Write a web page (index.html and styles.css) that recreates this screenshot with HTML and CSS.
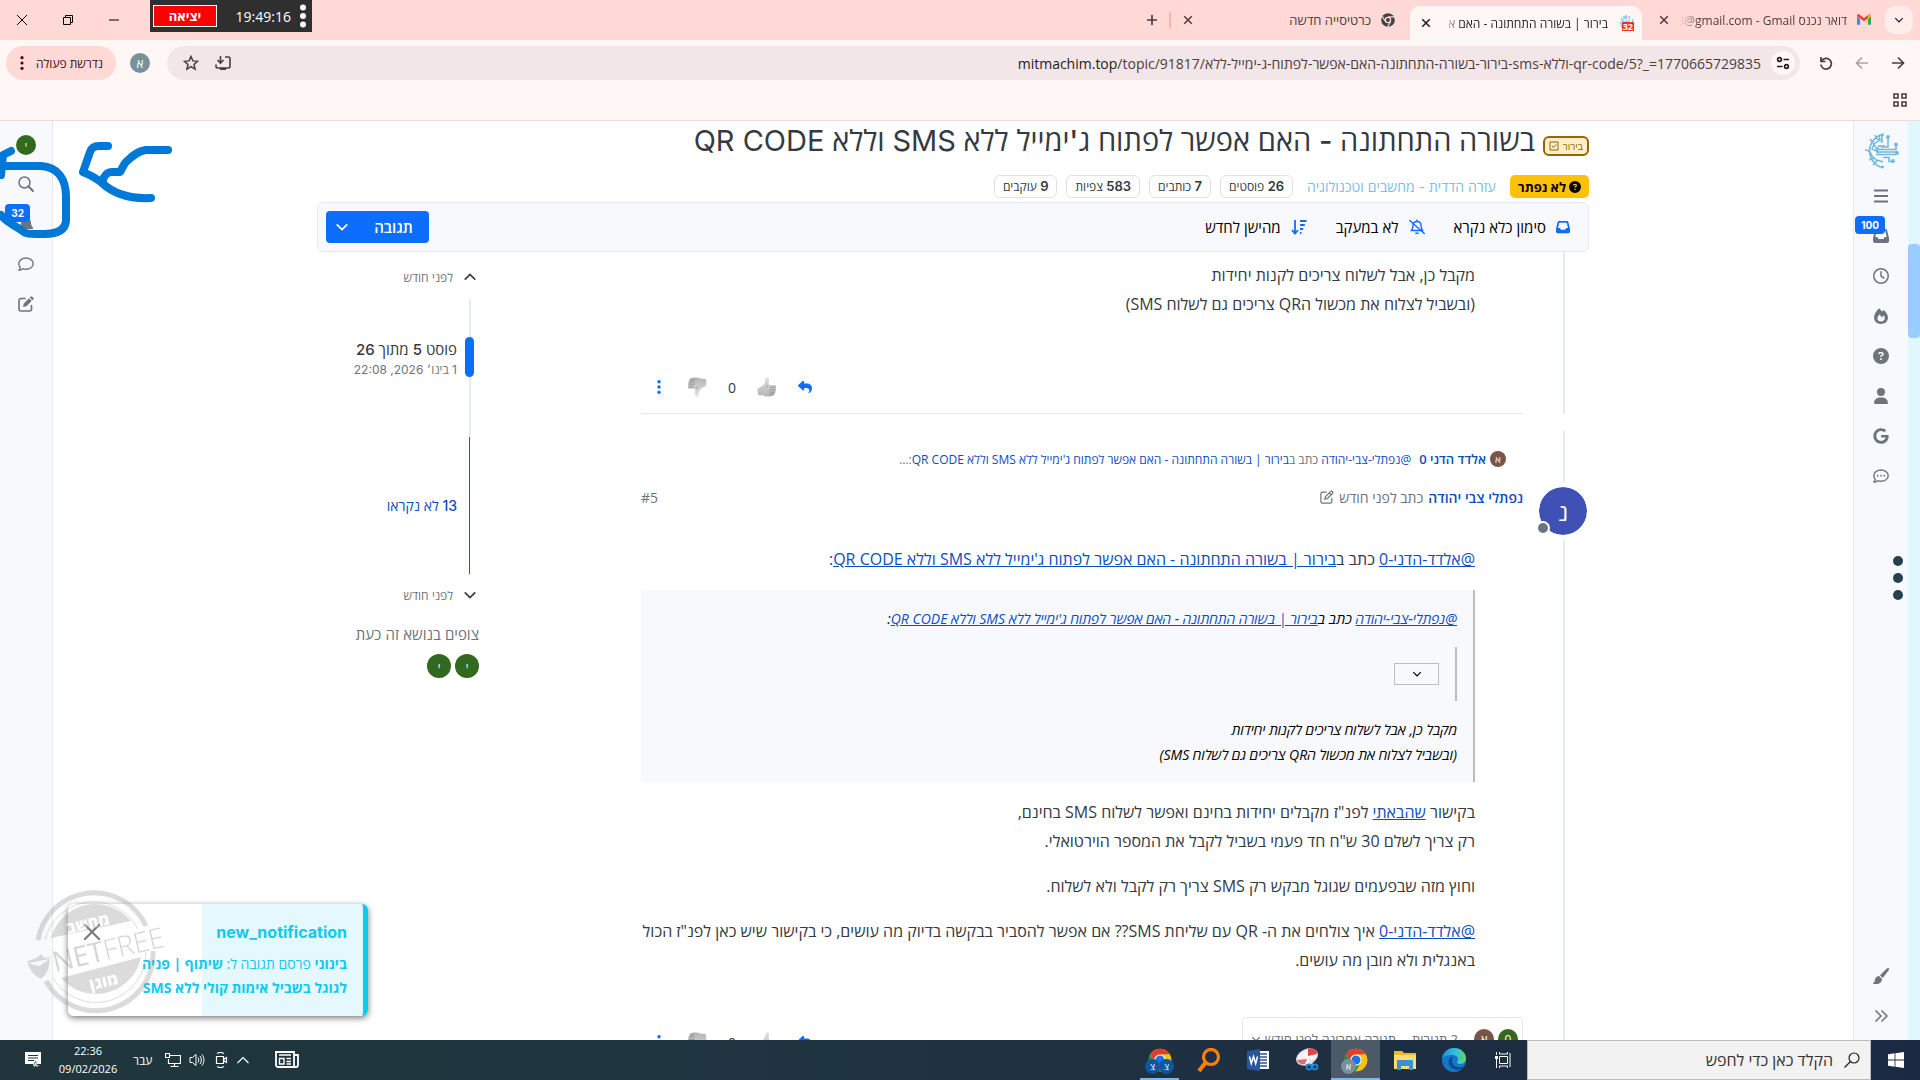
FILE: index.html
```html
<!DOCTYPE html>
<html lang="he" dir="rtl">
<head>
<meta charset="utf-8">
<title>בירור | בשורה התחתונה</title>
<link rel="stylesheet" href="styles.css">
</head>
<body>
<svg class="defs" aria-hidden="true">
  <defs><linearGradient id="tg" x2="0" y2="1"><stop stop-color="#e2e2e2"/><stop offset="1" stop-color="#b4b4b4"/></linearGradient></defs>
  <symbol id="x" viewBox="0 0 16 16"><path d="M3 3l10 10M13 3L3 13" fill="none" stroke="currentColor" stroke-width="2"/></symbol>
  <symbol id="down" viewBox="0 0 16 16"><path d="M2 5l6 6 6-6" fill="none" stroke="currentColor" stroke-width="2"/></symbol>
  <symbol id="up" viewBox="0 0 16 16"><path d="M2 11l6-6 6 6" fill="none" stroke="currentColor" stroke-width="2"/></symbol>
  <symbol id="inbox" viewBox="0 0 512 512"><path fill="currentColor" d="M121 32C91.6 32 66 52 58.9 80.5L1.9 308.4C.6 313.5 0 318.7 0 323.9V416c0 35.3 28.7 64 64 64H448c35.3 0 64-28.7 64-64V323.9c0-5.2-.6-10.4-1.9-15.5l-57-227.9C446 52 420.4 32 391 32H121zm0 64H391l48 192H387.8c-12.1 0-23.2 6.8-28.6 17.7l-14.3 28.6c-5.4 10.8-16.5 17.7-28.6 17.7H195.8c-12.1 0-23.2-6.8-28.6-17.7l-14.3-28.6c-5.4-10.8-16.5-17.7-28.6-17.7H73L121 96z"/></symbol>
  <symbol id="help" viewBox="0 0 512 512"><path fill="currentColor" fill-rule="evenodd" d="M256 512A256 256 0 1 0 256 0a256 256 0 1 0 0 512zM169.8 165.3c7.9-22.3 29.1-37.3 52.8-37.3h58.3c34.9 0 63.1 28.3 63.1 63.1c0 22.6-12.1 43.5-31.7 54.8L280 264.4c-.2 13-10.9 23.6-24 23.6c-13.3 0-24-10.7-24-24V250.5c0-8.6 4.6-16.5 12.1-20.8l44.3-25.4c4.7-2.7 7.6-7.7 7.6-13.1c0-8.4-6.8-15.1-15.1-15.1H222.6c-3.4 0-6.4 2.1-7.5 5.3l-.4 1.2c-4.4 12.5-18.2 19-30.6 14.6s-19-18.2-14.6-30.6l.4-1.2zM224 352a32 32 0 1 1 64 0 32 32 0 1 1-64 0z"/></symbol>
  <symbol id="reply" viewBox="0 0 512 512"><path fill="currentColor" d="M205 34.8c11.5 5.1 19 16.6 19 29.2v64H336c97.2 0 176 78.8 176 176c0 113.3-81.5 163.9-100.2 174.1c-2.5 1.4-5.3 1.9-8.1 1.9c-10.9 0-19.7-8.9-19.7-19.7c0-7.5 4.3-14.4 9.8-19.5c9.4-8.8 22.2-26.4 22.2-56.7c0-53-43-96-96-96H224v64c0 12.6-7.4 24.1-19 29.2s-25 3-34.4-5.4l-160-144C3.9 225.7 0 217.1 0 208s3.9-17.7 10.6-23.8l160-144c9.4-8.5 22.9-10.6 34.4-5.4z"/></symbol>
  <symbol id="search" viewBox="0 0 16 16"><circle cx="6.5" cy="6.5" r="5.5" fill="none" stroke="currentColor" stroke-width="1.5"/><path d="M10.5 10.5L15 15" stroke="currentColor" stroke-width="1.9" stroke-linecap="round"/></symbol>
  <symbol id="edit" viewBox="0 0 16 16"><path d="M7 2.5H3A2 2 0 0 0 1 4.500v8.500a2 2 0 0 0 2 2h8.500a2 2 0 0 0 2-2V9.500" fill="none" stroke="currentColor" stroke-width="1.600" stroke-linecap="round"/><path d="M5 11l.8-3.500L11 2.300l2.700 2.700-5.200 5.200zM11.700 1.600l.9-.9a1.200 1.200 0 0 1 1.700 0l1 1a1.200 1.200 0 0 1 0 1.700l-.9.9z" fill="currentColor"/></symbol>
  <symbol id="editline" viewBox="0 0 16 16"><path d="M7 2.500H3A2 2 0 0 0 1 4.500v8.500a2 2 0 0 0 2 2h8.500a2 2 0 0 0 2-2V9.500M5.500 10.500l.8-3L12 1.800a1.500 1.500 0 0 1 2.200 2.200L8.500 9.700zM10.500 3.300l2.200 2.200" fill="none" stroke="currentColor" stroke-width="1.400" stroke-linecap="round"/></symbol>
  <symbol id="comment" viewBox="0 0 16 16"><path d="M8 2c3.900 0 7.200 2.400 7.200 5.700S11.900 13.300 8 13.300c-1.200 0-2.300-.2-3.300-.6C3.600 13.700 2.200 14.200 1 14.200c.7-.9 1.200-2 1.200-3.100C1.300 10.100.8 9 .8 7.700.8 4.400 4.100 2 8 2z" fill="none" stroke="currentColor" stroke-width="1.400" stroke-linejoin="round"/></symbol>
  <symbol id="thumb" viewBox="0 0 20 20"><path d="M1 11c3-1 6-3 7-6 .3-1.500.2-3.800 1.200-4.600 1.800-.8 3.200 1 2.800 4L11.500 8H18c1.200.3 1.500 1.600.6 2.500.8.600.8 1.800-.1 2.300.6.7.5 1.800-.4 2.300.4.900 0 1.800-.9 2-.4 1.700-2 2.400-4 2.400-4 0-5-.2-7.500-1.300H1.500C.4 16 .3 13 1 11z" fill="url(#tg)"/><path d="M13 10.200h5.500M12.500 12.800h6M12.500 15.200h5.500M12.500 17.300h4.700M11.500 8c-1 .4-1.600 1.200-1.800 2.200" stroke="#8d8d8d" stroke-width=".9" fill="none"/></symbol>
  <symbol id="chrome" viewBox="0 0 32 32"><circle cx="16" cy="16" r="15" fill="#fbc116"/><path d="M3 8.500A15 15 0 0 1 29 8.500H16a7.500 7.500 0 0 0-6.500 11.200z" fill="#e33b2e"/><path d="M3 8.500A15 15 0 0 0 16 31l6.500-11.300a7.500 7.500 0 0 1-13 0z" fill="#229342"/><path d="M16 31A15 15 0 0 0 29 8.500H16a7.500 7.500 0 0 1 6.500 11.200z" fill="#fbc116"/><circle cx="16" cy="16" r="7.500" fill="#fff"/><circle cx="16" cy="16" r="6" fill="#1a73e8"/></symbol>
  <symbol id="globe" viewBox="0 0 36 36"><g fill="none" stroke="#6db9dd" stroke-width="1.500"><path d="M19.500 1.500A17 17 0 0 0 19.500 34.500"/><path d="M7 6l4 5-2 5 6 3-4-8 7-5M2 17c4 0 6 3 7 6l5 5-4 4M14 27l6 2M22 13h-6l-2 4M12 2l2 4 5 3V2M16.500 1.500v7M6 27l5-2"/><path d="M13 16.500h21M13 19h22M13 21.500h20"/><path d="M25 4v10h-7M33 12v5M20 24.500h6v4h4"/></g><g fill="#6db9dd"><circle cx="19.500" cy="1.800" r="1.500"/><circle cx="25" cy="4" r="1.900"/><circle cx="33" cy="11.500" r="1.900"/><circle cx="34" cy="20" r="1.900"/><circle cx="30" cy="28" r="1.900"/><circle cx="19.500" cy="34" r="1.500"/></g></symbol>
</svg>

<header class="browser">
  <div class="tabs">
    <button class="tab-menu" aria-label="חיפוש כרטיסיות"><svg class="i10"><use href="#down"/></svg></button>
    <div class="tab gmail">
      <svg class="i14" viewBox="0 0 16 14"><path d="M0 2v10.500h3.500V6z" fill="#4285f4"/><path d="M12.500 6v6.500H16V2z" fill="#34a853"/><path d="M0 2.500l8 6 8-6V1.500C15.500.3 14 .3 13 1L8 4.800 3 1C2 .3.5.3 0 1.500z" fill="#ea4335"/><path d="M12.500 1.500V5.200L16 2.600C16 .6 14 .2 12.500 1.500z" fill="#fbbc04"/></svg>
      <span class="tab-text">דואר נכנס <bdi dir="ltr">3@gmail.com - Gmail</bdi></span>
      <svg class="i12"><use href="#x"/></svg>
    </div>
    <div class="tab active">
      <span class="fav"><svg class="i16"><use href="#globe"/></svg><b>32</b></span>
      <span class="tab-text">בירור | בשורה התחתונה - האם א</span>
      <svg class="i12"><use href="#x"/></svg>
    </div>
    <div class="tab plain">
      <svg class="i14" viewBox="0 0 16 16"><circle cx="8" cy="8" r="7.800" fill="#3f4246"/><circle cx="8" cy="8" r="3" fill="#3f4246" stroke="#ffd9d6" stroke-width="1.500"/><path d="M8 4.500h7M5 9.800L1.500 3.800M11 9.800L7.600 15.600" stroke="#ffd9d6" stroke-width="1.300"/></svg>
      <span class="tab-text">כרטיסייה חדשה</span>
      <svg class="i12"><use href="#x"/></svg>
    </div>
    <i class="tab-sep"></i>
    <button class="new-tab" aria-label="כרטיסייה חדשה"><svg class="i12" viewBox="0 0 12 12"><path d="M6 1v10M1 6h10" stroke="currentColor" stroke-width="1.700"/></svg></button>
    <div class="win">
      <svg class="i12" viewBox="0 0 12 12"><path d="M1 6h10" stroke="#000"/></svg>
      <svg class="i12" viewBox="0 0 12 12"><path d="M1.500 3.500h7v7h-7zM3.500 3.500v-2h7v7h-2" fill="none" stroke="#000"/></svg>
      <svg class="i12" viewBox="0 0 12 12"><path d="M1 1l10 10M11 1L1 11" stroke="#000"/></svg>
    </div>
  </div>
  <div class="nav">
    <svg class="i14" viewBox="0 0 14 14"><path d="M1 7h11M7 1.500L12.500 7 7 12.500" fill="none" stroke="currentColor" stroke-width="1.700"/></svg>
    <svg class="i14 dim" viewBox="0 0 14 14"><path d="M13 7H2M7 1.500L1.500 7 7 12.500" fill="none" stroke="currentColor" stroke-width="1.700"/></svg>
    <svg class="i14" viewBox="0 0 14 14"><path d="M2 1v4.500h4.500M2.500 5A5.300 5.300 0 1 1 1.800 8.500" fill="none" stroke="currentColor" stroke-width="1.700"/></svg>
    <div class="omnibox">
      <span class="site"><svg class="i14" viewBox="0 0 14 14"><g fill="none" stroke="#1f1a1b" stroke-width="1.600"><circle cx="3.500" cy="3.500" r="1.900"/><path d="M7.500 3.500H13M1 10.500h5.500"/><circle cx="10.500" cy="10.500" r="1.900"/></g></svg></span>
      <span class="url" dir="ltr"><b>mitmachim.top</b>/topic/91817/בירור-בשורה-התחתונה-האם-אפשר-לפתוח-ג-ימייל-ללא-sms-וללא-qr-code/5?_=1770665729835</span>
      <svg class="i16" viewBox="0 0 16 16"><path d="M10 2h3.500a1.500 1.500 0 0 1 1.500 1.500v8a1.500 1.500 0 0 1-1.500 1.500h-11A1.500 1.500 0 0 1 1 11.500V9.500M5.500 1v6.500M2.500 5l3 3 3-3" fill="none" stroke="currentColor" stroke-width="1.600"/><path d="M5 13h6v2H5z" fill="currentColor"/></svg>
      <svg class="i16" viewBox="0 0 16 16"><path d="M8 1.500l1.900 4.400 4.700.4-3.600 3.100 1.100 4.700L8 11.600l-4.100 2.500L5 9.400 1.400 6.300l4.700-.4z" fill="none" stroke="currentColor" stroke-width="1.500"/></svg>
    </div>
    <span class="profile">א</span>
    <button class="action-pill">נדרשת פעולה<svg class="v14" viewBox="0 0 4 14"><g fill="currentColor"><circle cx="2" cy="1.700" r="1.600"/><circle cx="2" cy="7" r="1.600"/><circle cx="2" cy="12.300" r="1.600"/></g></svg></button>
  </div>
  <div class="bookmarks"><svg class="i14" viewBox="0 0 14 14"><path d="M1 1h4v4H1zM9 1h4v4H9zM1 9h4v4H1zM9 9h4v4H9z" fill="none" stroke="currentColor" stroke-width="1.600"/></svg></div>
  <div class="timer">
    <svg class="v24" viewBox="0 0 8 24"><g fill="#fff"><circle cx="4" cy="3.500" r="3"/><circle cx="4" cy="12" r="3"/><circle cx="4" cy="20.500" r="3"/></g></svg>
    <span>19:49:16</span><button>יציאה</button>
  </div>
</header>

<div class="page">
  <div class="scroll"><i></i></div>
  <nav class="side right">
    <svg class="i36"><use href="#globe"/></svg>
    <a href="#" aria-label="תפריט"><svg class="i16" viewBox="0 0 16 16"><path d="M1 2.500h14M1 8h14M1 13.500h14" stroke="currentColor" stroke-width="1.800"/></svg></a>
    <a href="#" aria-label="לא נקראו"><svg class="i16"><use href="#inbox"/></svg><b class="count">100</b></a>
    <a href="#" aria-label="אחרונים"><svg class="i16" viewBox="0 0 512 512"><path fill="currentColor" d="M464 256A208 208 0 1 1 48 256a208 208 0 1 1 416 0zM0 256a256 256 0 1 0 512 0A256 256 0 1 0 0 256zM232 120V256c0 8 4 15.500 10.700 20l96 64c11 7.400 25.900 4.400 33.300-6.700s4.400-25.900-6.700-33.300L280 243.200V120c0-13.300-10.700-24-24-24s-24 10.700-24 24z"/></svg></a>
    <a href="#" aria-label="פופולרי"><svg class="i16" viewBox="0 0 16 16"><path fill="currentColor" fill-rule="evenodd" d="M6 .2c1.300 1 2.300 2.200 3.200 3.500.4-.6.900-1.100 1.500-1.600C12.900 4 15 7 15 9.500 15 13.200 12 16 8 16s-7-2.900-7-6.500C1 6.800 3.200 2.800 6 .2zM8.100 13.500c2.200 0 3.700-1.300 3.700-3.200 0-1.100-.5-1.900-1.200-2.700L8.900 9.500C8 8.300 7.300 7.400 6.700 6.600 5.200 8.200 4.400 9.200 4.400 10.500c0 1.900 1.600 3 3.700 3z"/></svg></a>
    <a href="#" aria-label="לא נפתרו"><svg class="i16"><use href="#help"/></svg></a>
    <a href="#" aria-label="משתמשים"><svg class="i16" viewBox="0 0 448 512"><path fill="currentColor" d="M224 256A128 128 0 1 0 224 0a128 128 0 1 0 0 256zm-45.700 48C79.800 304 0 383.800 0 482.300C0 498.700 13.300 512 29.700 512H418.300c16.400 0 29.700-13.300 29.700-29.700C448 383.800 368.200 304 269.700 304H178.300z"/></svg></a>
    <a href="#" aria-label="חיפוש גוגל"><svg class="i16" viewBox="0 0 488 512"><path fill="currentColor" d="M488 261.800C488 403.300 391.100 504 248 504 110.800 504 0 393.200 0 256S110.800 8 248 8c66.800 0 123 24.500 166.300 64.900l-67.500 64.900C258.500 52.600 94.300 116.600 94.300 256c0 86.500 69.100 156.600 153.700 156.600 98.200 0 135-70.400 140.800-106.900H248v-85.300h236.100c2.300 12.700 3.900 24.900 3.900 41.400z"/></svg></a>
    <a href="#" aria-label="צ'אט"><svg class="i16" viewBox="0 0 16 16"><use href="#comment"/><g fill="currentColor"><circle cx="4.700" cy="7.700" r=".9"/><circle cx="8" cy="7.700" r=".9"/><circle cx="11.300" cy="7.700" r=".9"/></g></svg></a>
    <span class="grow"></span>
    <a href="#" aria-label="עיצוב"><svg class="i16" viewBox="0 0 16 16"><path fill="currentColor" d="M15.700.3c.5.500.4 1.300-.2 2.200L9.800 10 7 7.300 13.500.8c.8-.7 1.700-1 2.200-.5zM6.200 8l2.700 2.700C9 14 6.500 16 3.500 16H.8c-.8 0-1-.9-.3-1.300C2 14 1.500 13 2 11.500 2.500 9.300 4.200 8.100 6.200 8z"/></svg></a>
    <a href="#" aria-label="הרחבה"><svg class="i16" viewBox="0 0 16 16"><path d="M2.500 2.500L8 8l-5.500 5.500M8.500 2.500L14 8l-5.500 5.500" fill="none" stroke="currentColor" stroke-width="1.500"/></svg></a>
    <span class="float-dots"><i></i><i></i><i></i></span>
  </nav>

  <main>
    <div class="topic">
      <h1><span class="tag">בירור <svg class="i10" viewBox="0 0 10 10"><path d="M1 1h8v8H1zM3 5l1.500 1.500L7.200 3.500" fill="none" stroke="currentColor"/></svg></span><span>בשורה התחתונה - האם אפשר לפתוח ג'ימייל ללא <span class="latin">SMS</span> וללא <span class="latin">QR CODE</span></span></h1>
      <div class="meta">
        <span class="unsolved"><svg class="i12"><use href="#help"/></svg>לא נפתר</span>
        <a class="cat" href="#">עזרה הדדית - מחשבים וטכנולוגיה</a>
        <span class="stats"><span class="stat"><b>26</b> פוסטים</span><span class="stat"><b>7</b> כותבים</span><span class="stat"><b>583</b> צפיות</span><span class="stat"><b>9</b> עוקבים</span></span>
      </div>
      <div class="bar">
        <button class="tool"><svg class="i14"><use href="#inbox"/></svg>סימון כלא נקרא</button>
        <button class="tool"><svg class="i16" viewBox="0 0 16 16"><g fill="none" stroke="currentColor" stroke-width="1.400" stroke-linecap="round"><path d="M8 1v1.500C5.500 2.500 4 4.300 4 6.500 4 9 3.500 10 2.500 11.500h11C12.500 10 12 9 12 6.500c0-2.200-1.500-4-4-4"/><path d="M6.800 14.300h2.400M.7 1.500l14.600 13"/></g></svg>לא במעקב</button>
        <button class="tool"><svg class="i16" viewBox="0 0 16 16"><path d="M4 1v13M1 11l3 3.500L7 11M9 2h6.500M9 6h4.800M9 10h3.200M9 14h1.500" fill="none" stroke="currentColor" stroke-width="1.800"/></svg>מהישן לחדש</button>
        <div class="reply-group"><button class="reply">תגובה</button><button class="split" aria-label="אפשרויות תגובה"><svg class="i14"><use href="#down"/></svg></button></div>
      </div>
      <div class="cols">
        <div class="posts">
          <article class="post">
            <div class="body"><p>מקבל כן, אבל לשלוח צריכים לקנות יחידות<br>(ובשביל לצלוח את מכשול הQR צריכים גם לשלוח SMS)</p></div>
            <div class="acts first"><button aria-label="הגב"><svg class="i14"><use href="#reply"/></svg></button><button aria-label="בעד"><svg class="i20"><use href="#thumb"/></svg></button><span>0</span><button aria-label="נגד"><svg class="i20 flipped"><use href="#thumb"/></svg></button><button aria-label="עוד"><svg class="v14" viewBox="0 0 4 14"><g fill="currentColor"><circle cx="2" cy="1.800" r="1.700"/><circle cx="2" cy="7" r="1.700"/><circle cx="2" cy="12.200" r="1.700"/></g></svg></button></div>
          </article>
          <article class="post second">
            <div class="ava">נ<i></i></div>
            <div class="parent"><span class="mini brown">א</span><a class="who" href="#">אלדד הדני 0</a><span class="snip"><a href="#">@נפתלי-צבי-יהודה</a> כתב ב<a href="#">בירור | בשורה התחתונה - האם אפשר לפתוח ג'ימייל ללא SMS וללא QR CODE</a>:…</span></div>
            <div class="head"><a href="#"><b>נפתלי צבי יהודה</b></a><span>כתב לפני חודש</span><svg class="i14"><use href="#editline"/></svg><a class="num" href="#" dir="ltr">#5</a></div>
            <div class="body">
              <p><a href="#">@אלדד-הדני-0</a> כתב ב<a href="#">בירור | בשורה התחתונה - האם אפשר לפתוח ג'ימייל ללא SMS וללא QR CODE</a>:</p>
              <blockquote>
                <p><a href="#">@נפתלי-צבי-יהודה</a> כתב ב<a href="#">בירור | בשורה התחתונה - האם אפשר לפתוח ג'ימייל ללא SMS וללא QR CODE</a>:</p>
                <blockquote class="inner"><button aria-label="הצגת הציטוט"><svg class="i10"><use href="#down"/></svg></button></blockquote>
                <p>מקבל כן, אבל לשלוח צריכים לקנות יחידות<br>(ובשביל לצלוח את מכשול הQR צריכים גם לשלוח SMS)</p>
              </blockquote>
              <p>בקישור <a href="#">שהבאתי</a> לפנ"ז מקבלים יחידות בחינם ואפשר לשלוח SMS בחינם,<br>רק צריך לשלם 30 ש"ח חד פעמי בשביל לקבל את המספר הוירטואלי.</p>
              <p>וחוץ מזה שבפעמים שגוגל מבקש רק SMS צריך רק לקבל ולא לשלוח.</p>
              <p><a href="#">@אלדד-הדני-0</a> איך צולחים את ה- QR עם שליחת SMS?? אם אפשר להסביר בבקשה בדיוק מה עושים, כי בקישור שיש כאן לפנ"ז הכול<br>באנגלית ולא מובן מה עושים.</p>
            </div>
            <div class="foot">
              <a class="replies" href="#"><span class="mini big green">0</span><span class="mini big brown">א</span><span>2 תגובות</span><span>תגובה אחרונה לפני חודש</span><svg class="i10"><use href="#down"/></svg></a>
              <div class="acts"><button aria-label="הגב"><svg class="i14"><use href="#reply"/></svg></button><button aria-label="בעד"><svg class="i20"><use href="#thumb"/></svg></button><span>0</span><button aria-label="נגד"><svg class="i20 flipped"><use href="#thumb"/></svg></button><button aria-label="עוד"><svg class="v14" viewBox="0 0 4 14"><g fill="currentColor"><circle cx="2" cy="1.800" r="1.700"/><circle cx="2" cy="7" r="1.700"/><circle cx="2" cy="12.200" r="1.700"/></g></svg></button></div>
            </div>
          </article>
        </div>
        <aside class="thread">
          <a class="jump" href="#"><svg class="i14"><use href="#up"/></svg>לפני חודש</a>
          <div class="track">
            <div class="seen"><i class="knob"></i><div><strong>פוסט 5 מתוך 26</strong><small>1 בינו׳ 2026, 22:08</small></div></div>
            <div class="unread"><a href="#">13 לא נקראו</a></div>
          </div>
          <a class="jump" href="#"><svg class="i14"><use href="#down"/></svg>לפני חודש</a>
          <h2>צופים בנושא זה כעת</h2>
          <div class="viewers"><span>י</span><span>י</span></div>
        </aside>
      </div>
    </div>
  </main>

  <nav class="side left">
    <a href="#" class="me">י</a>
    <a href="#" aria-label="חיפוש"><svg class="i16"><use href="#search"/></svg></a>
    <a href="#" aria-label="התראות"><svg class="i16" viewBox="0 0 448 512"><path fill="currentColor" d="M224 0c-17.700 0-32 14.300-32 32V51.200C119 66 64 130.600 64 208v18.800c0 47-17.300 92.400-48.500 127.600l-7.400 8.300c-8.400 9.400-10.400 22.900-5.300 34.400S19.400 416 32 416H416c12.600 0 24-7.400 29.200-18.900s3.100-25-5.300-34.400l-7.400-8.300C401.300 319.200 384 273.900 384 226.800V208c0-77.400-55-142-128-156.800V32c0-17.700-14.300-32-32-32z"/></svg><b class="count">32</b></a>
    <a href="#" aria-label="צ'אטים"><svg class="i16"><use href="#comment"/></svg></a>
    <a href="#" aria-label="טיוטות"><svg class="i16"><use href="#edit"/></svg></a>
  </nav>

  <svg class="ink" viewBox="0 0 180 130" aria-hidden="true"><g fill="none" stroke="#0078d7" stroke-width="8" stroke-linecap="round" stroke-linejoin="round"><path d="M11 30L3 34L1 54M3 45h38c17 1 25 13 25 31v24c-1 10-10 13-22 13-12 0-18 1-23-4-8-6-14-7-20-15"/><path d="M108 25h-9c-6 0-8 3-9 6l-7 20c9 4 12 5 19 11 13 12 30 16 49 15"/><path d="M168 29h-22c-9 1-16 8-21 13l-5 9h-8c-5 0-8 4-9 8"/></g></svg>

  <div class="toast" role="alert">
    <button class="close" aria-label="סגירה"><svg class="i16" viewBox="0 0 16 16"><path d="M0 0l16 16M16 0L0 16" stroke="#777" stroke-width="2"/></svg></button>
    <strong dir="ltr">new_notification</strong>
    <p><b>בינוני</b> פרסם תגובה ל: <b>שיתוף | פניה<br>לגוגל בשביל אימות קולי ללא SMS</b></p>
  </div>
  <svg class="stamp" viewBox="0 0 150 124" aria-hidden="true">
    <g fill="none" stroke="#999"><path d="M12 50A57 57 0 0 1 120 36M20 91A57 57 0 0 0 127 61" stroke-width="5"/><path d="M19 50A50 50 0 0 1 112 39M27 88A50 50 0 0 0 120 62" stroke-width="1"/></g>
    <path d="M25 48A46 46 0 0 1 105 31zM35 88A46 46 0 0 0 115 67z" fill="#999"/>
    <path d="M1 71l9-3 5-4 4 4 5-1c0 10-2 17-9 22-7-3-12-9-14-18zM3 73l10 3 10-7" fill="#999" stroke="#fff" stroke-width=".5"/>
    <g direction="rtl" text-anchor="middle" class="stamp-he"><text x="63" y="39" transform="rotate(-13 63 39)">מחשב</text><text x="79" y="97" transform="rotate(-13 79 97)">מוגן</text></g>
    <g direction="ltr" class="stamp-en"><text x="29" y="82" transform="rotate(-13 29 82)">NET<tspan class="thin">FREE</tspan></text></g>
  </svg>
</div>

<footer class="task">
  <button class="start" aria-label="התחל"><svg class="i16" viewBox="0 0 16 16"><path fill="#fff" d="M0 2.200L6.600 1.300v6.300H0zM7.400 1.200L16 0v7.600H7.400zM0 8.400h6.600v6.300L0 13.800zM7.400 8.400H16V16l-8.600-1.200z"/></svg></button>
  <label class="find"><svg class="i16" viewBox="0 0 16 16"><circle cx="10" cy="6" r="5" fill="none" stroke="#222" stroke-width="1.200"/><path d="M6.500 9.500L.5 15.500" stroke="#222" stroke-width="1.300"/></svg><input type="text" placeholder="הקלד כאן כדי לחפש" aria-label="חיפוש"></label>
  <div class="apps">
    <button aria-label="תצוגת משימות"><svg class="i16" viewBox="0 0 16 16"><path d="M4.500 4.500h8v7h-8zM4.500 0v2h8V0M4.500 16v-2h8v2M1.500 0v3M1.500 6v10M15 1v14" fill="none" stroke="#fff"/><path d="M0 4h3v3H0z" fill="#fff"/></svg></button>
    <button aria-label="Edge"><svg class="i24" viewBox="0 0 24 24"><defs><linearGradient id="eg" x2="1"><stop stop-color="#1b8fd8"/><stop offset=".6" stop-color="#35c1e0"/><stop offset="1" stop-color="#62d957"/></linearGradient></defs><circle cx="12" cy="12" r="12" fill="#1377cc"/><path d="M0 11C1 4 6 0 12 0c7 0 12 5 12 10 0 4-3 6-6 6-2 0-3-1-3-2s1-1 1-3c0-2-2-4-6-4C5 7 1 9 0 11z" fill="url(#eg)"/><path d="M9 9c-5 4-2 12 6 13 3 0 6-2 7-4-6 3-12 0-12-5 0-2 1-3 1-4z" fill="#0c4a93"/></svg></button>
    <button aria-label="סייר הקבצים"><svg class="i24" viewBox="0 0 24 24"><path d="M1 3h8l2 2h12v16H1z" fill="#f0b72b"/><path d="M1 7h22v14H1z" fill="#fddc70"/><path d="M4 12h16v10h-4v-4H8v4H4z" fill="#3a8fd9"/></svg></button>
    <button class="on" aria-label="Chrome"><svg class="i24"><use href="#chrome"/></svg><i class="who1">א</i></button>
    <button aria-label="כלי החיתוך"><svg class="i24" viewBox="0 0 24 24"><ellipse cx="12" cy="9" rx="11" ry="7.500" transform="rotate(-25 12 9)" fill="#f4f4f4" stroke="#c9cdd2"/><path d="M13 1c5-2 9 1 9 5l-9 2z" fill="#e04848"/><path d="M2 12c1 3 4 5 8 4l2-5z" fill="#df6a6a"/><path d="M14 10l4 8M20 10l-6 7" stroke="#ddd" stroke-width="1.500"/><g fill="none" stroke="#1b87d6" stroke-width="1.800"><circle cx="14" cy="19" r="2.500"/><circle cx="20" cy="19" r="2.500"/></g></svg></button>
    <button aria-label="Word"><svg class="i24" viewBox="0 0 24 24"><path d="M12 3h11v18H12z" fill="#fff"/><path d="M14 6h7M14 9h7M14 12h7M14 15h7M14 18h7" stroke="#2b579a" stroke-width="1.300"/><path d="M1 3l13-2v22L1 21z" fill="#2b579a"/><path d="M3.500 8.500l1.800 7 2.200-7 2.200 7 1.800-7" fill="none" stroke="#fff" stroke-width="1.500"/></svg></button>
    <button aria-label="Everything"><svg class="i24" viewBox="0 0 24 24"><circle cx="14" cy="9" r="7.500" fill="none" stroke="#ff7f00" stroke-width="3.200"/><path d="M9 14l-7 9" stroke="#ff7f00" stroke-width="4"/></svg></button>
    <button class="run" aria-label="Chrome"><svg class="i24"><use href="#chrome"/></svg><i class="who2">צ</i><i class="who3">צ</i></button>
  </div>
  <div class="tray">
    <svg class="i24 news" viewBox="0 0 24 24"><path d="M1 4h18v15H3a2 2 0 0 1-2-2zM19 7h4v10a2 2 0 0 1-2 2h-3" fill="none" stroke="#fff" stroke-width="1.800"/><path d="M4 7h12M11.500 10.500H16M11.500 13.500H16M11.500 16H16" stroke="#fff" stroke-width="1.400"/><path d="M4.500 10.500h4.500V16H4.500z" fill="none" stroke="#fff" stroke-width="1.400"/></svg>
    <svg class="i12" viewBox="0 0 12 12"><path d="M.5 9L6 3.500 11.500 9" fill="none" stroke="#fff" stroke-width="1.200"/></svg>
    <svg class="i16" viewBox="0 0 16 16"><path d="M3.500 4.500h7v7h-7zM10.500 7.500l3-2v5l-3-2M4 1.500C6 .3 9 .3 11 1.500M4 14.500c2 1.200 5 1.200 7 0" fill="none" stroke="#fff" stroke-width="1.200"/></svg>
    <svg class="i16" viewBox="0 0 16 16"><path d="M1 5.500h2.500L7 2.500v11l-3.500-3H1zM9 5.500c1 1.500 1 3.500 0 5M11 4c1.800 2.500 1.800 5.500 0 8M13 2.500c2.600 3.500 2.600 7.500 0 11" fill="none" stroke="#fff"/></svg>
    <svg class="i16" viewBox="0 0 16 16"><path d="M5 3.500h10.500v8H3.500V7M.5 1.500h4v4h-4zM9.500 11.500V14M5.500 14.500h8" fill="none" stroke="#fff" stroke-width="1.200"/></svg>
    <span class="lang">עבר</span>
    <time>22:36<br>09/02/2026</time>
    <svg class="i16" viewBox="0 0 16 16"><path d="M0 0h16v12h-4l-3 3-1-3H0z" fill="#fff"/><path d="M3 3.500h10M3 6h10M3 8.500h6" stroke="#20363f"/><path d="M11 9a3 3 0 1 0 4 4 3 3 0 0 1-4-4z" fill="#fff" stroke="#20363f" stroke-width=".6"/></svg>
  </div>
</footer>
</body>
</html>
```
FILE: styles.css
```css
* { box-sizing: border-box; }
html, body { height: 100%; }
body {
  margin: 0;
  display: flex;
  flex-direction: column;
  overflow: hidden;
  background: #fff;
  color: #343a40;
  font-family: Inter, "Open Sans", sans-serif;
  font-size: 14px;
}
p, h1, h2, blockquote { margin: 0; }
button { border: 0; padding: 0; background: none; font: inherit; color: inherit; display: flex; align-items: center; justify-content: center; }
a { color: #0b4ec0; text-decoration: none; }
svg { flex: none; display: block; }
.defs { position: absolute; width: 0; height: 0; }
.i10 { width: 10px; height: 10px; }
.i12 { width: 12px; height: 12px; }
.i14 { width: 14px; height: 14px; }
.i16 { width: 16px; height: 16px; }
.i20 { width: 20px; height: 20px; }
.i24 { width: 24px; height: 24px; }
.i36 { width: 36px; height: 36px; }
.v14 { width: 4px; height: 14px; }
.v24 { width: 8px; height: 24px; }

/* browser chrome */
.browser { position: relative; flex: none; background: #fff7f6; border-bottom: 1px solid #f5d9d6; font-family: "Open Sans", sans-serif; color: #4e3b3b; }
.tabs { display: flex; align-items: center; height: 40px; padding: 0 7px 0 16px; background: #ffd9d6; font-size: 12px; }
.tab-menu { width: 28px; height: 28px; border-radius: 10px; background: #ffedeb; color: #1f1a1b; }
.tab { display: flex; align-items: center; gap: 10px; height: 34px; }
.tab-text { flex: 1; overflow: hidden; white-space: nowrap; }
.gmail { width: 243px; padding: 0 14px 0 16px; }
.gmail .tab-text { -webkit-mask: linear-gradient(90deg, transparent, #000 20px); }
.active { width: 232px; align-self: flex-end; padding: 0 8px 0 10px; border-radius: 10px 10px 0 0; background: #fff7f6; color: #1f1a1b; }
.active .tab-text { -webkit-mask: linear-gradient(90deg, transparent, #000 20px); }
.plain { width: 228px; padding: 0 15px 0 0; }
.plain .tab-text { font-size: 13px; }
.fav { position: relative; }
.fav b { position: absolute; right: 0; bottom: 0; padding: 0 1px; background: #e8352a; color: #fff; font-size: 9px; line-height: 9px; }
.tab-sep { width: 2px; height: 16px; margin: 0 11px; background: #ffb4ab; }
.new-tab { width: 12px; height: 28px; }
.win { display: flex; gap: 34px; margin-inline-start: auto; }
.nav { display: flex; align-items: center; gap: 22px; height: 46px; padding: 0 15px 0 6px; }
.dim { opacity: .45; }
.omnibox { flex: 1; display: flex; align-items: center; gap: 16px; height: 34px; padding: 0 5px 0 16px; margin-inline-start: -3px; border-radius: 17px; background: #f2e6e8; }
.site { display: grid; place-items: center; width: 24px; height: 24px; border-radius: 50%; background: #fff7f6; }
.url { flex: 1; margin-right: -6px; text-align: right; font-size: 14px; white-space: nowrap; }
.url b { font-weight: 400; color: #1f1a1b; }
.profile { display: grid; place-items: center; width: 20px; height: 20px; margin: 0 -5px 0 -8px; border-radius: 50%; background: #78909c; color: #fff; font-size: 12px; }
.action-pill { gap: 12px; height: 34px; padding: 0 13px 0 14px; border-radius: 17px; background: #ffd9d6; color: #410e0b; font-size: 12px; }
.bookmarks { height: 34px; padding: 7px 13px; }
.timer { position: absolute; left: 150px; top: 0; display: flex; align-items: center; gap: 8px; width: 162px; height: 32px; padding: 0 5px 0 3px; background: #2f2f2f; color: #fff; font-size: 14px; }
.timer button { width: 64px; height: 22px; margin-inline-start: auto; border: 1px solid #fff; background: #f00; font-size: 13px; font-weight: 700; }

/* page frame */
.page { position: relative; flex: 1; min-height: 0; display: flex; }
.scroll { flex: none; width: 12px; padding-top: 123px; background: #e1f7ff; }
.scroll i { display: block; height: 94px; border-radius: 4px; background: #99ccff; }
.side { position: relative; flex: none; display: flex; flex-direction: column; align-items: center; background: #f8f9fc; color: #6c757d; }
.side a { position: relative; display: grid; place-items: center; width: 40px; height: 40px; color: inherit; }
.right { width: 55px; padding: 12px 0 4px; border-left: 1px solid #e5e8eb; }
.right > .i36 { margin-bottom: 7px; }
.left { width: 53px; padding-top: 14px; border-right: 1px solid #e5e8eb; }
.side .me { width: 20px; height: 20px; margin-bottom: 9px; border-radius: 50%; background: #33691e; color: #fff; font-size: 10px; }
.grow { flex: 1; }
.count { position: absolute; right: 16px; top: 0; padding: 0 6px; border-radius: 4px; background: #0d6efd; color: #fff; font-size: 10px; line-height: 18px; }
.float-dots { position: absolute; right: 5px; top: 435px; display: grid; gap: 7px; }
.float-dots i { width: 10px; height: 10px; border-radius: 50%; background: #264050; }

/* topic */
main { flex: 1; min-width: 0; overflow: hidden; }
.topic { max-width: 1272px; margin: 0 auto; }
h1 { display: flex; align-items: center; gap: 8px; font-size: 29px; line-height: 40px; font-weight: 500; white-space: nowrap; }
.latin { font-weight: 400; }
.tag { display: flex; align-items: center; gap: 4px; height: 20px; margin-top: 9px; padding: 0 4px; border: 2px solid #996500; border-radius: 6px; background: #ffeecb; color: #996500; font-size: 10px; }
.meta { display: flex; align-items: center; gap: 14px; height: 23px; margin-top: 14px; font-size: 12px; }
.unsolved { display: flex; align-items: center; gap: 3px; height: 23px; padding: 0 8px; border-radius: 5px; background: #ffc107; color: #000; font-size: 13px; font-weight: 700; }
.cat { color: #7cc0e6; font-size: 14px; }
.stats { display: flex; gap: 9px; }
.stat { height: 23px; padding: 0 8px; border: 1px solid #dee2e6; border-radius: 6px; line-height: 21px; }
.stat b { font-size: 13px; font-weight: 600; }
.bar { display: flex; align-items: center; gap: 29px; height: 50px; margin-top: 4px; padding: 0 18px 0 8px; border: 1px solid #e5e8eb; border-radius: 6px; background: #f8f9fc; font-size: 15px; }
.tool { gap: 10px; color: #000; font-weight: 500; }
.tool svg { color: #0d6efd; }
.reply-group { display: flex; height: 32px; margin-inline-start: auto; border-radius: 4px; background: #0d6efd; color: #fff; font-weight: 600; }
.reply { width: 71px; }
.split { width: 32px; }
.cols { display: flex; justify-content: space-between; }
.posts { width: 948px; font-family: "Open Sans", sans-serif; }
.post { position: relative; margin-right: 24px; padding-top: 9px; padding-right: 40px; border-right: 2px solid #e9ecef; }
.second { margin-top: 17px; padding-top: 16px; }
.body { padding-right: 48px; font-size: 16px; line-height: 29px; }
.body p { margin-bottom: 16px; white-space: nowrap; }
.body a { text-decoration: underline; }
.acts { display: flex; align-items: center; gap: 21px; height: 30px; color: #0d6efd; }
.acts span { color: #343a40; }
.acts button { min-width: 14px; }
.first { height: 42px; margin-top: 53px; padding: 0 0 11px 11px; border-bottom: 1px solid #e5e8eb; justify-content: flex-end; }
.flipped { transform: rotate(180deg); }
.ava { position: absolute; right: -26px; top: 54px; display: grid; place-items: center; width: 52px; height: 52px; border: 2px solid #fff; border-radius: 50%; background: #3f51b5; background-clip: padding-box; color: #fff; font-size: 24px; outline: 2px solid #fff; }
.ava i { position: absolute; left: -3px; bottom: 0; width: 14px; height: 14px; border: 2px solid #fff; border-radius: 50%; background: #6c757d; }
.parent { display: flex; align-items: center; gap: 4px; height: 24px; padding-right: 17px; }
.who { font-weight: 600; font-size: 13px; }
.snip { margin-right: 4px; font-size: 12px; color: #6c757d; white-space: nowrap; }
.mini { display: grid; place-items: center; width: 16px; height: 16px; border-radius: 50%; color: #fff; font-size: 10px; }
.big { width: 20px; height: 20px; font-size: 12px; }
.brown { background: #795548; }
.green { background: #33691e; }
.head { display: flex; align-items: center; gap: 5px; height: 24px; margin: 14px 0 36px; color: #6c757d; }
.head b { font-weight: 600; }
.head .num { margin-right: auto; color: #6c757d; }
.body blockquote { margin-bottom: 16px; padding: 16px 16px 15px; border-right: 2px solid #bdbdbd; background: #f8f9fc; color: #000; font-size: 14px; line-height: 25px; font-style: italic; }
.body blockquote p:last-child { margin-bottom: 0; }
.body .inner { height: 54px; }
.inner button { width: 45px; height: 22px; border: 1px solid #bdbdbd; }
.foot { display: flex; justify-content: space-between; align-items: flex-start; margin-top: 42px; }
.foot .acts { height: 50px; padding: 0 0 0 11px; }
.replies { display: flex; align-items: center; gap: 4px; height: 44px; padding: 0 4px 0 8px; border: 1px solid #e5e8eb; border-radius: 4px; color: #6c757d; font-size: 13px; }
.replies span + span + span { margin-right: 12px; }

/* thread navigation */
.thread { display: flex; flex-direction: column; width: 163px; padding-top: 15px; }
.jump { display: flex; align-items: center; gap: 10px; height: 20px; padding-right: 3px; color: #6c757d; font-size: 12px; }
.jump svg { color: #343a40; }
.track { display: flex; flex-direction: column; margin: 12px 9px 11px 0; }
.seen { position: relative; height: 138px; padding: 41px 12px 0 0; border-right: 2px solid #e9ecef; }
.seen strong, .seen small { display: block; line-height: 20px; }
.seen strong { font-size: 15px; font-weight: 500; }
.seen small { font-size: 12px; color: #6c757d; }
.knob { position: absolute; right: -5px; top: 38px; width: 9px; height: 40px; border-radius: 5px; background: #0d6efd; }
.unread { display: flex; align-items: center; height: 137px; margin-right: 1px; padding-right: 12px; border-right: 1px solid #0b5ed7; font-weight: 500; }
.thread h2 { margin-top: 20px; padding-right: 1px; font-size: 15px; line-height: 20px; font-weight: 400; color: #6c757d; }
.viewers { display: flex; gap: 4px; margin-top: 9px; padding-right: 1px; }
.viewers span { display: grid; place-items: center; width: 24px; height: 24px; border-radius: 50%; background: #33691e; color: #fff; font-size: 11px; }

/* overlays */
.ink { position: absolute; left: 0; top: 0; width: 180px; height: 130px; }
.toast { position: absolute; left: 68px; bottom: 24px; width: 300px; height: 112px; padding: 16px 16px; border-right: 5px solid #0dcaf0; border-radius: 6px; background: linear-gradient(90deg, #fff 134px, #e5f8fd 134px); color: #0dcaf0; box-shadow: 0 2px 6px #0008; font-size: 14px; line-height: 24px; font-family: "Open Sans", sans-serif; }
.toast strong { display: block; margin-bottom: 8px; font-family: Inter, sans-serif; font-size: 16px; text-align: right; }
.toast p { white-space: nowrap; }
.close { position: absolute; left: 16px; top: 20px; }
.stamp { position: absolute; left: 26px; bottom: 26px; width: 150px; height: 124px; opacity: .35; }
.stamp-he { fill: #fff; font: 800 16px "Open Sans", sans-serif; }
.stamp-en { fill: #888; font: 400 28px "Open Sans", sans-serif; }
.thin { font-weight: 300; }

/* taskbar */
.task { flex: none; display: flex; height: 40px; background: linear-gradient(90deg, #20363c, #1f3540 35%, #1b2943); color: #fff; font-family: "Open Sans", sans-serif; font-size: 12px; border-left: 4px solid #20363c; }
.start { width: 49px; }
.find { display: flex; align-items: center; gap: 9px; width: 344px; padding: 0 10px; border: 1px solid #bbb; background: #f2f2f2; }
.find input { flex: 1; min-width: 0; border: 0; background: none; font: 16px "Open Sans", sans-serif; }
.find input::placeholder { color: #333; opacity: 1; }
.apps { display: flex; }
.apps button { position: relative; width: 49px; height: 40px; }
.apps .on { background: #4b5a66; box-shadow: inset 0 -2px #76b9ed; }
.apps .run::after { content: ""; position: absolute; left: 5px; right: 5px; bottom: 0; height: 2px; background: #76b9ed; }
.apps i { position: absolute; display: grid; place-items: center; width: 15px; height: 15px; border-radius: 50%; background: #0b57a0; font-size: 9px; font-style: normal; }
.apps .who1 { left: 10px; top: 19px; background: #78909c; }
.apps .who2 { left: 10px; top: 19px; }
.apps .who3 { left: 24px; top: 19px; }
.tray { display: flex; align-items: center; gap: 8px; margin-inline-start: auto; padding-left: 21px; }
.news { margin-left: 18px; }
.lang { margin: 0 5px 0 2px; }
.tray time { width: 62px; margin: 0 4px 0 8px; font-size: 11px; line-height: 18px; text-align: center; white-space: nowrap; }
```
